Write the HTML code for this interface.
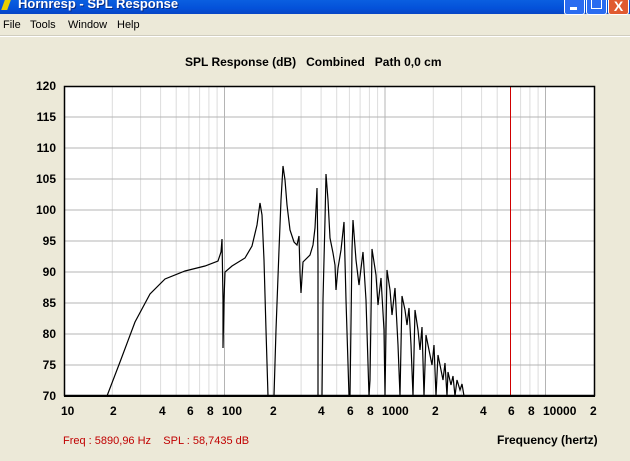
<!DOCTYPE html>
<html><head><meta charset="utf-8"><style>
body{margin:0;width:630px;height:461px;overflow:hidden;background:#ece9d8;font-family:"Liberation Sans",sans-serif;position:relative}
.tb{position:absolute;left:0;top:0;width:630px;height:14px;background:linear-gradient(#0a5fe0,#0451d9 60%,#0845c4);}
.tt{position:absolute;left:18px;top:-4px;color:#fff;font-weight:bold;font-size:13px;text-shadow:1px 1px #0a2a80}
.btn{position:absolute;top:-6px;width:19px;height:19px;border:1px solid #fff;border-radius:3px;background:#2a6cf0}
.menu{position:absolute;top:19px;font-size:11px;color:#000}
.ax{position:absolute;font-family:"Liberation Sans",sans-serif;font-weight:bold;font-size:12px;color:#000}
</style></head><body>
<div class="tb"><div class="tt">Hornresp - SPL Response</div>
<div style="position:absolute;left:3px;top:0;width:6px;height:10px;background:#e8d000;transform:skewX(-20deg)"></div>
<div class="btn" style="left:564px"><div style="position:absolute;left:5px;top:12px;width:7px;height:3px;background:#fff"></div></div>
<div class="btn" style="left:586px"><div style="position:absolute;left:4px;top:3px;width:9px;height:9px;border:1px solid #fff"></div></div>
<div class="btn" style="left:608px;background:#e05a30;color:#fff;font-weight:bold;font-size:14px;text-align:center;line-height:22px">X</div>
</div>
<div class="menu" style="left:3px">File</div>
<div class="menu" style="left:30px">Tools</div>
<div class="menu" style="left:68px">Window</div>
<div class="menu" style="left:117px">Help</div>
<div style="position:absolute;left:0;top:36px;width:630px;height:1px;background:#fff"></div>
<div style="position:absolute;left:0;top:35px;width:630px;height:1px;background:#d0cdbf"></div>
<div class="ax" style="left:185px;top:55px;font-size:12px">SPL Response (dB)&nbsp;&nbsp;&nbsp;Combined&nbsp;&nbsp;&nbsp;Path 0,0 cm</div>
<svg width="630" height="461" style="position:absolute;left:0;top:0">
<rect x="64" y="86" width="531" height="310" fill="#fff"/>
<g stroke="#dcdcdc" stroke-width="1">
<line x1="112.3" y1="86" x2="112.3" y2="396"/><line x1="140.6" y1="86" x2="140.6" y2="396"/><line x1="160.6" y1="86" x2="160.6" y2="396"/><line x1="176.2" y1="86" x2="176.2" y2="396"/><line x1="188.9" y1="86" x2="188.9" y2="396"/><line x1="199.6" y1="86" x2="199.6" y2="396"/><line x1="208.9" y1="86" x2="208.9" y2="396"/><line x1="217.1" y1="86" x2="217.1" y2="396"/>
<line x1="272.8" y1="86" x2="272.8" y2="396"/><line x1="301.1" y1="86" x2="301.1" y2="396"/><line x1="321.1" y1="86" x2="321.1" y2="396"/><line x1="336.7" y1="86" x2="336.7" y2="396"/><line x1="349.4" y1="86" x2="349.4" y2="396"/><line x1="360.1" y1="86" x2="360.1" y2="396"/><line x1="369.4" y1="86" x2="369.4" y2="396"/><line x1="377.6" y1="86" x2="377.6" y2="396"/>
<line x1="433.3" y1="86" x2="433.3" y2="396"/><line x1="461.6" y1="86" x2="461.6" y2="396"/><line x1="481.6" y1="86" x2="481.6" y2="396"/><line x1="497.2" y1="86" x2="497.2" y2="396"/><line x1="520.6" y1="86" x2="520.6" y2="396"/><line x1="529.9" y1="86" x2="529.9" y2="396"/><line x1="538.1" y1="86" x2="538.1" y2="396"/>
</g>
<g stroke="#b4b4b4"><line x1="224.5" y1="86" x2="224.5" y2="396"/><line x1="385" y1="86" x2="385" y2="396"/><line x1="545.5" y1="86" x2="545.5" y2="396"/>
<line x1="64" y1="117" x2="595" y2="117"/><line x1="64" y1="148" x2="595" y2="148"/><line x1="64" y1="179" x2="595" y2="179"/><line x1="64" y1="210" x2="595" y2="210"/><line x1="64" y1="241" x2="595" y2="241"/><line x1="64" y1="272" x2="595" y2="272"/><line x1="64" y1="303" x2="595" y2="303"/><line x1="64" y1="334" x2="595" y2="334"/><line x1="64" y1="365" x2="595" y2="365"/></g>
<line x1="510.5" y1="86" x2="510.5" y2="396" stroke="#d00000"/>
<polyline fill="none" stroke="#000" stroke-width="1.2" points="107,396 120,362 135,322 150,294 165,279 185,271 205,266 218,261 221,252 222,239 223,300 223,348 224,300 225,272 232,266 245,258 252,246 257,225 260,203 262,215 264,260 266,330 268,396 274,396 276,330 279,250 281,200 283,166 285,180 287,205 290,230 294,242 297,245 299,236 300,273 301,293 303,262 310,255 313,245 315,228 317,188 318,260 318,396 322,396 323,300 325,220 326,174 328,200 330,238 333,253 335,265 336,290 338,268 341,250 344,222 346,300 349,396 350,396 352,250 353,220 356,260 359,285 363,252 366,300 369,396 370,380 372,249 376,275 378,305 381,278 384,330 385,396 386,330 387,270 390,290 392,315 395,288 398,345 400,396 402,296 405,310 407,325 409,308 411,345 413,396 415,310 418,330 420,350 422,327 424,396 426,335 429,350 432,365 434,345 436,396 438,355 441,370 443,380 445,363 447,396 448,372 451,385 453,376 455,396 457,380 460,390 462,384 464,396"/>
<rect x="64.5" y="86.5" width="530" height="309" fill="none" stroke="#000" stroke-width="1.5"/>
<line x1="64" y1="396" x2="595" y2="396" stroke="#000" stroke-width="2"/>
</svg>
<div class="ax" style="left:0;width:56px;text-align:right;top:79px">120</div>
<div class="ax" style="left:0;width:56px;text-align:right;top:110px">115</div>
<div class="ax" style="left:0;width:56px;text-align:right;top:141px">110</div>
<div class="ax" style="left:0;width:56px;text-align:right;top:172px">105</div>
<div class="ax" style="left:0;width:56px;text-align:right;top:203px">100</div>
<div class="ax" style="left:0;width:56px;text-align:right;top:234px">95</div>
<div class="ax" style="left:0;width:56px;text-align:right;top:265px">90</div>
<div class="ax" style="left:0;width:56px;text-align:right;top:296px">85</div>
<div class="ax" style="left:0;width:56px;text-align:right;top:327px">80</div>
<div class="ax" style="left:0;width:56px;text-align:right;top:358px">75</div>
<div class="ax" style="left:0;width:56px;text-align:right;top:389px">70</div>
<div class="ax" style="left:61px;top:404px">10</div>
<div class="ax" style="left:110px;top:404px">2</div>
<div class="ax" style="left:159px;top:404px">4</div>
<div class="ax" style="left:187px;top:404px">6</div>
<div class="ax" style="left:207px;top:404px">8</div>
<div class="ax" style="left:222px;top:404px">100</div>
<div class="ax" style="left:270px;top:404px">2</div>
<div class="ax" style="left:318px;top:404px">4</div>
<div class="ax" style="left:347px;top:404px">6</div>
<div class="ax" style="left:367px;top:404px">8</div>
<div class="ax" style="left:382px;top:404px">1000</div>
<div class="ax" style="left:432px;top:404px">2</div>
<div class="ax" style="left:480px;top:404px">4</div>
<div class="ax" style="left:508px;top:404px">6</div>
<div class="ax" style="left:528px;top:404px">8</div>
<div class="ax" style="left:543px;top:404px">10000</div>
<div class="ax" style="left:590px;top:404px">2</div>
<div style="position:absolute;left:63px;top:435px;font-size:11px;color:#c00000">Freq : 5890,96 Hz&nbsp;&nbsp;&nbsp;&nbsp;SPL : 58,7435 dB</div>
<div class="ax" style="left:497px;top:433px;font-size:12px">Frequency (hertz)</div>
</body></html>
